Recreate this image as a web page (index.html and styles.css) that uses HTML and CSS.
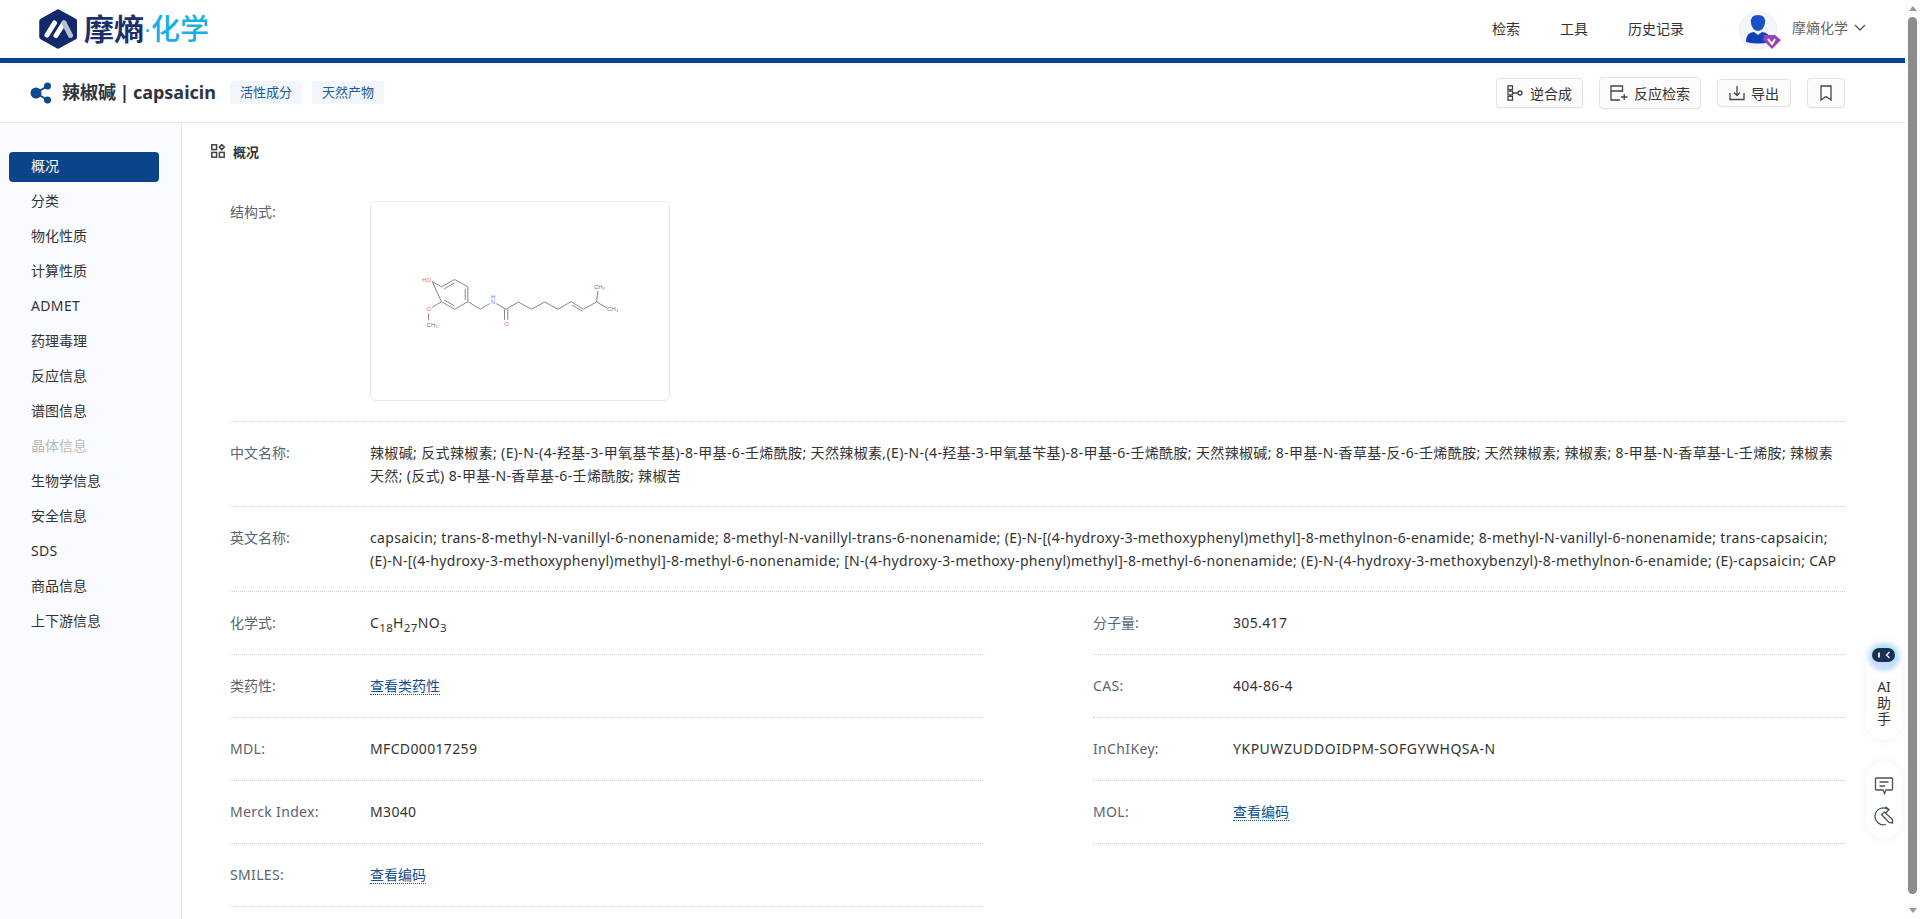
FILE: index.html
```html
<!DOCTYPE html>
<html lang="zh-CN">
<head>
<meta charset="utf-8">
<title>辣椒碱 | capsaicin</title>
<link rel="stylesheet" href="styles.css">
</head>
<body>
<div class="page">
  <div class="app">
    <header class="topbar">
      <div class="logo">
        <svg class="logo-mark" viewBox="0 0 38 40"><path d="M19 1 L36.500 10.500 Q37.500 11 37.500 12 V28 Q37.500 29 36.500 29.500 L19 39 L2 29.500 Q1 29 1 28 V12 Q1 11 2 10.500 Z" fill="#122a6b" stroke="#122a6b" stroke-width="1.500" stroke-linejoin="round"/><path d="M8 26 L15.500 14 M17 26.500 L25 14" stroke="#fff" stroke-width="5" stroke-linecap="round"/><path d="M25 14 L31.500 26.500" stroke="#b9c0d4" stroke-width="5" stroke-linecap="round"/></svg>
        <span class="logo-name">摩熵</span><span class="logo-dot">·</span><span class="logo-chem">化学</span>
      </div>
      <nav class="nav">
        <a>检索</a><a>工具</a><a>历史记录</a>
      </nav>
      <div class="user">
        <div class="avatar">
          <svg viewBox="0 0 46 44" width="46" height="44"><circle cx="21" cy="21" r="18.500" fill="#f1f6fb" stroke="#f3f4f8" stroke-width="2"/><path d="M14 14 Q13 6 21 6 Q29 6 28 14 Q27 21 21 22 Q15 21 14 14Z" fill="#1a50c8"/><path d="M9 33 Q9 23 17 23 L21 26 L25 23 Q33 23 33 33 Q21 36 9 33Z" fill="#1140b4"/><path d="M27 26 L38 26 L44 31 L35 40 L26 31 Z" fill="#9a42b8"/><path d="M31 30 L35 35 L38 30" fill="none" stroke="#fff" stroke-width="2"/></svg>
        </div>
        <span class="user-name">摩熵化学</span>
        <svg class="chevron" viewBox="0 0 12 8" width="12" height="8"><path d="M1 1 L6 6 L11 1" fill="none" stroke="#555" stroke-width="1.300"/></svg>
      </div>
    </header>

    <section class="titlebar">
      <svg class="title-icon" viewBox="0 0 22 22" width="22" height="22"><circle cx="6" cy="11" r="5.500" fill="#0b4a8e"/><circle cx="17.500" cy="4" r="3.500" fill="#0b4a8e"/><circle cx="17.500" cy="18" r="3.500" fill="#0b4a8e"/><path d="M6 11 L17.500 4 M6 11 L17.500 18" stroke="#0b4a8e" stroke-width="2"/></svg>
      <h1 class="title">辣椒碱 | capsaicin</h1>
      <span class="tag">活性成分</span>
      <span class="tag">天然产物</span>
      <div class="actions">
        <button class="btn btn-retro">
          <svg viewBox="0 0 16 16" width="16" height="16" class="ico"><rect x="1" y="0.800" width="4.500" height="3.800"/><rect x="1" y="6.100" width="4.500" height="3.800"/><rect x="1" y="11.400" width="4.500" height="3.800"/><path d="M5.500 8 H11 M3.200 4.600 V6.100 M3.200 9.900 V11.400"/><circle cx="13" cy="8" r="2"/></svg>
          逆合成
        </button>
        <button class="btn btn-react">
          <svg viewBox="0 0 18 16" width="18" height="16" class="ico"><path d="M12.500 7 V1 H1 V15 H10 M1 6 H12.500 M11 12 H17.500 M14.200 9 V15"/></svg>
          反应检索
        </button>
        <button class="btn btn-export">
          <svg viewBox="0 0 16 16" width="16" height="16" class="ico"><path d="M1 8 V14.500 H15 V8"/><path d="M8 1 V10 M5 7.500 L8 10.500 L11 7.500"/></svg>
          导出
        </button>
        <button class="btn btn-mark" aria-label="收藏">
          <svg viewBox="0 0 14 16" width="14" height="16" class="ico"><path d="M2 1 H12 V15 L7 11.500 L2 15 Z"/></svg>
        </button>
      </div>
    </section>

    <div class="body">
      <aside class="side">
        <a class="side-item active">概况</a>
        <a class="side-item">分类</a>
        <a class="side-item">物化性质</a>
        <a class="side-item">计算性质</a>
        <a class="side-item latin">ADMET</a>
        <a class="side-item">药理毒理</a>
        <a class="side-item">反应信息</a>
        <a class="side-item">谱图信息</a>
        <a class="side-item muted">晶体信息</a>
        <a class="side-item">生物学信息</a>
        <a class="side-item">安全信息</a>
        <a class="side-item latin">SDS</a>
        <a class="side-item">商品信息</a>
        <a class="side-item">上下游信息</a>
      </aside>

      <main class="main">
        <h2 class="section-head">
          <svg viewBox="0 0 14 14" width="14" height="14" class="sec-ico"><rect x="0.800" y="0.800" width="4.800" height="4.800"/><rect x="0.800" y="8.400" width="4.800" height="4.800"/><rect x="8.400" y="8.400" width="4.800" height="4.800"/><path d="M10.800 0.600 L13.300 3.100 L10.800 5.600 L8.300 3.100 Z"/></svg>
          概况
        </h2>

        <div class="row row-struct">
          <div class="label label-struct">结构式:</div>
          <div class="struct-box">
            <svg viewBox="-30 -117 900 600" width="298" height="198" class="mol">
              <g fill="none" stroke="#858585" stroke-width="3">
                <path d="M154 124 L182 140 L222 118 L262 140 L262 185 L222 208 L182 185 Z"/>
                <path d="M190 146 L222 128 M254 146 V180 M222 198 L190 180"/>
                <path d="M182 185 L154 202 M143 220 V242"/>
                <path d="M262 185 L300 208 L328 191 M348 191 L378 208 L415 186 L455 208 L495 186 L535 208 L575 185 L612 208 L652 186 L656 152 M652 186 L684 204"/>
                <path d="M373 208 V240 M383 208 V240 M577 195 L609 214"/>
              </g>
              <g class="mol-text">
                <text x="124" y="124" class="red">HO</text>
                <text x="137" y="214" class="red">O</text>
                <text x="137" y="261">CH₃</text>
                <text x="332" y="176" class="blue">H</text>
                <text x="332" y="192" class="blue">N</text>
                <text x="372" y="259" class="red">O</text>
                <text x="644" y="147">CH₃</text>
                <text x="684" y="214">CH₃</text>
              </g>
            </svg>
          </div>
        </div>

        <div class="row row-text">
          <div class="label">中文名称:</div>
          <div class="value multi zh-names">辣椒碱; 反式辣椒素; (E)-N-(4-羟基-3-甲氧基苄基)-8-甲基-6-壬烯酰胺; 天然辣椒素,(E)-N-(4-羟基-3-甲氧基苄基)-8-甲基-6-壬烯酰胺; 天然辣椒碱; 8-甲基-N-香草基-反-6-壬烯酰胺; 天然辣椒素; 辣椒素; 8-甲基-N-香草基-L-壬烯胺; 辣椒素<br>天然; (反式) 8-甲基-N-香草基-6-壬烯酰胺; 辣椒苦</div>
        </div>
        <div class="row row-text">
          <div class="label">英文名称:</div>
          <div class="value multi latin-long">capsaicin; trans-8-methyl-N-vanillyl-6-nonenamide; 8-methyl-N-vanillyl-trans-6-nonenamide; (E)-N-[(4-hydroxy-3-methoxyphenyl)methyl]-8-methylnon-6-enamide; 8-methyl-N-vanillyl-6-nonenamide; trans-capsaicin;<br>(E)-N-[(4-hydroxy-3-methoxyphenyl)methyl]-8-methyl-6-nonenamide; [N-(4-hydroxy-3-methoxy-phenyl)methyl]-8-methyl-6-nonenamide; (E)-N-(4-hydroxy-3-methoxybenzyl)-8-methylnon-6-enamide; (E)-capsaicin; CAP</div>
        </div>

        <div class="grid">
          <div class="cell"><div class="label">化学式:</div><div class="value latin">C<sub>18</sub>H<sub>27</sub>NO<sub>3</sub></div></div>
          <div class="cell"><div class="label">分子量:</div><div class="value latin">305.417</div></div>
          <div class="cell"><div class="label">类药性:</div><div class="value"><a class="link">查看类药性</a></div></div>
          <div class="cell"><div class="label latin">CAS:</div><div class="value latin">404-86-4</div></div>
          <div class="cell"><div class="label latin">MDL:</div><div class="value latin">MFCD00017259</div></div>
          <div class="cell"><div class="label latin">InChIKey:</div><div class="value latin wide">YKPUWZUDDOIDPM-SOFGYWHQSA-N</div></div>
          <div class="cell"><div class="label latin">Merck Index:</div><div class="value latin">M3040</div></div>
          <div class="cell"><div class="label latin">MOL:</div><div class="value"><a class="link">查看编码</a></div></div>
          <div class="cell"><div class="label latin">SMILES:</div><div class="value"><a class="link">查看编码</a></div></div>
        </div>
      </main>
    </div>

    <div class="float-ai">
      <svg viewBox="0 0 36 32" width="36" height="32" class="robot"><defs><linearGradient id="halo" x1="0.800" y1="0" x2="0.300" y2="1"><stop offset="0" stop-color="#a4e6f2"/><stop offset="1" stop-color="#d2d8ff"/></linearGradient><filter id="soft" x="-20%" y="-20%" width="140%" height="140%"><feGaussianBlur stdDeviation="2"/></filter></defs><ellipse cx="18" cy="15" rx="16" ry="14" fill="url(#halo)" filter="url(#soft)"/><rect x="6" y="6" width="23" height="14" rx="7" fill="#1c2f52"/><rect x="12" y="10.500" width="2" height="5" fill="#dfe8f5"/><path d="M23.500 10 L20.500 13 L23.500 16" stroke="#dfe8f5" stroke-width="1.500" fill="none"/></svg>
      <span>AI</span><span>助</span><span>手</span>
    </div>
    <div class="float-tools">
      <svg viewBox="0 0 20 20" width="20" height="20" class="tool-ico"><path d="M2.500 2 H17.500 Q18.500 2 18.500 3 V13 Q18.500 14 17.500 14 H12 L10.500 17.500 L9 14 H2.500 Q1.500 14 1.500 13 V3 Q1.500 2 2.500 2 Z M5.500 6 H14.500 M5.500 10 H11"/></svg>
      <svg viewBox="0 0 20 20" width="20" height="20" class="tool-ico"><path d="M14.500 3.500 A8.500 8.500 0 1 0 12 18.500 M11.500 0.800 L15 3.500 L12 6.800 M7.500 8.500 L10.500 6 L18.500 13.500 L18.500 17 L15 16.500 Z"/></svg>
    </div>
  </div>

  <div class="scrollbar">
    <div class="arrow-up"></div>
    <div class="thumb"></div>
    <div class="arrow-down"></div>
  </div>
</div>
</body>
</html>
```
FILE: styles.css
```css
* { box-sizing: border-box; }
html, body { margin: 0; padding: 0; height: 100%; overflow: hidden; background: #fff; }
body { font-family: "Noto Sans", "Noto Sans CJK SC", sans-serif; font-size: 14px; color: #333; }
a { text-decoration: none; color: inherit; }
h1, h2 { margin: 0; }

.page { display: flex; width: 1920px; height: 919px; overflow: hidden; }
.app { position: relative; flex: 1; min-width: 0; display: flex; flex-direction: column; }

.latin { letter-spacing: .35px; }
.latin-long { letter-spacing: .32px; }
.wide { letter-spacing: .52px; }
.zh-names { letter-spacing: .36px; }

.topbar { height: 63px; flex: none; border-bottom: 5px solid #0a458a; display: flex; align-items: center; padding-left: 39px; background: #fff; position: relative; z-index: 2; box-shadow: 0 3px 8px rgba(20, 40, 90, .04); }
.logo { display: flex; align-items: center; margin-top: -1px; }
.logo-mark { width: 38px; height: 40px; margin-right: 7px; }
.logo-name { font-size: 30px; line-height: 40px; font-weight: 700; color: #1a2f6b; }
.logo-dot { font-size: 22px; line-height: 40px; color: #18aee8; width: 7px; text-align: center; }
.logo-chem { font-size: 29px; line-height: 40px; font-weight: 500; color: #18aee8; }
.nav { margin-left: auto; display: flex; gap: 40px; color: #333; line-height: 20px; }
.user { display: flex; align-items: center; margin-left: 53px; margin-right: 39px; color: #666; }
.avatar { width: 44px; height: 44px; margin-right: 11px; margin-top: 3px; }
.avatar svg { display: block; }
.user-name { line-height: 20px; margin-top: -2px; }
.chevron { margin-left: 6px; margin-top: -3px; }

.titlebar { height: 60px; flex: none; border-bottom: 1px solid #e8e9ee; display: flex; align-items: center; padding-left: 30px; padding-right: 60px; background: #fff; }
.title-icon { margin-right: 10px; }
.title { font-size: 18px; font-weight: 700; color: #2e3442; line-height: 24px; margin: -2px 14px 0 0; word-spacing: -1.200px; }
.tag { height: 23px; line-height: 22px; padding: 0 10px; background: #f2f5fa; border-radius: 3px; color: #1c5a9c; font-size: 13px; margin-right: 10px; width: 72px; text-align: center; white-space: nowrap; }
.actions { margin-left: auto; display: flex; gap: 16px; align-items: center; }
.btn { display: flex; align-items: center; justify-content: center; gap: 7px; font: inherit; color: #333; background: #fcfcfc; border: 1px solid #e3e3e3; border-radius: 4px; padding: 0; box-shadow: 0 1px 1px rgba(0,0,0,.03); }
.btn-retro { width: 87px; height: 30px; }
.btn-react { width: 102px; height: 32px; gap: 6px; }
.btn-export { width: 74px; height: 28px; gap: 6px; }
.btn-mark { width: 38px; height: 30px; }
.ico { fill: none; stroke: #444; stroke-width: 1.300; flex: none; }

.body { flex: 1; display: flex; min-height: 0; }
.side { width: 182px; flex: none; background: #fafbff; border-right: 1px solid #e8e9ee; padding: 29px 22px 0 9px; display: flex; flex-direction: column; gap: 5px; }
.side-item { height: 30px; line-height: 28px; padding-left: 22px; border-radius: 4px; color: #333; white-space: nowrap; width: 150px; }
.side-item.active { background: #0a458a; color: #fff; }
.side-item.muted { color: #bbb; }

.main { flex: 1; min-width: 0; padding: 20px 60px 0 48px; overflow: hidden; }
.section-head { display: flex; align-items: center; gap: 8px; font-size: 13px; font-weight: 700; color: #333; height: 16px; margin: 0 0 42px -19px; }
.sec-ico { fill: none; stroke: #444; stroke-width: 1.500; }

.row { display: flex; border-bottom: 1px dotted #c5cfdf; line-height: 23px; }
.row-text { padding: 19px 0; }
.row-struct { padding: 0 0 20px; }
.label { width: 140px; flex: none; color: #5a6472; white-space: nowrap; }
.label-struct { margin-top: -1px; }
.value { color: #333; min-width: 0; }
.multi { flex: 1; }
.struct-box { width: 300px; height: 200px; border: 1px solid #e6e9ef; border-radius: 6px; }
.mol { display: block; }
.mol-text text { font-family: "Liberation Sans", sans-serif; font-size: 18px; fill: #777; }
.mol-text .red { fill: #f0606c; }
.mol-text .blue { fill: #6a7ff0; }

.grid { display: grid; grid-template-columns: 753px 752px; column-gap: 110px; }
.cell { display: flex; height: 63px; align-items: center; border-bottom: 1px dotted #c5cfdf; line-height: 22px; }
.value sub { font-size: 11.500px; line-height: 0; }
.link { color: #0f4f94; border-bottom: 1px dotted #0f4f94; display: inline-block; line-height: 16px; }

.float-ai { position: absolute; left: 1866px; top: 642px; width: 36px; height: 98px; background: #fff; border-radius: 18px; box-shadow: 0 0 8px rgba(60, 80, 140, .08); display: flex; flex-direction: column; align-items: center; color: #333; font-size: 14px; line-height: 16px; }
.robot { margin-bottom: 5px; flex: none; }
.float-tools { position: absolute; left: 1866px; top: 761px; width: 36px; height: 78px; background: #fff; border-radius: 18px; box-shadow: 0 0 8px rgba(60, 80, 140, .08); display: flex; flex-direction: column; align-items: center; gap: 10px; padding-top: 15px; }
.tool-ico { fill: none; stroke: #44505f; stroke-width: 1.300; }

.scrollbar { width: 15px; flex: none; background: #fdfdfd; display: flex; flex-direction: column; align-items: center; }
.arrow-up { width: 0; height: 0; margin-top: 6px; border-left: 4.500px solid transparent; border-right: 4.500px solid transparent; border-bottom: 5px solid #9a9a9a; }
.thumb { width: 9px; margin-top: 6px; flex: 1; background: #8d8d8d; border-radius: 5px; }
.arrow-down { width: 0; height: 0; margin: 14px 0 6px; border-left: 4.500px solid transparent; border-right: 4.500px solid transparent; border-top: 5px solid #9a9a9a; }
```
